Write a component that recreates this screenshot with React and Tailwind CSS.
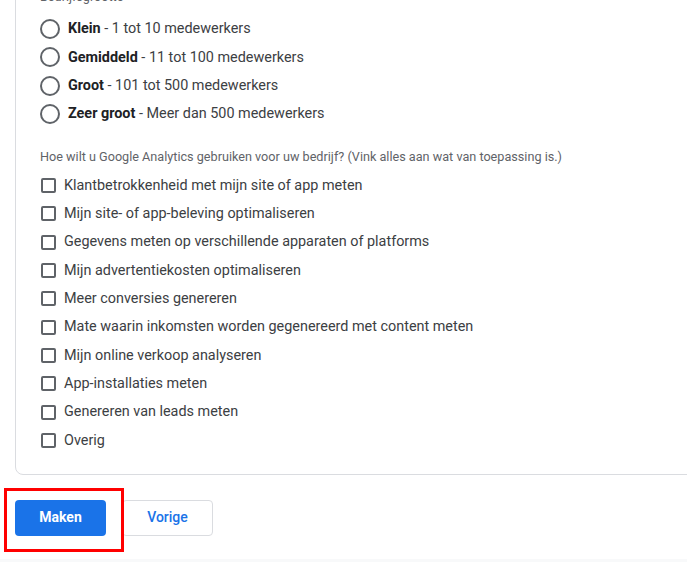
import React from "react";

const sizes = [
  ["Klein", "1 tot 10 medewerkers"],
  ["Gemiddeld", "11 tot 100 medewerkers"],
  ["Groot", "101 tot 500 medewerkers"],
  ["Zeer groot", "Meer dan 500 medewerkers"],
];

const uses = [
  "Klantbetrokkenheid met mijn site of app meten",
  "Mijn site- of app-beleving optimaliseren",
  "Gegevens meten op verschillende apparaten of platforms",
  "Mijn advertentiekosten optimaliseren",
  "Meer conversies genereren",
  "Mate waarin inkomsten worden gegenereerd met content meten",
  "Mijn online verkoop analyseren",
  "App-installaties meten",
  "Genereren van leads meten",
  "Overig",
];

export default function App() {
  return (
    <div
      className="w-[687px] h-[562px] overflow-hidden bg-white flex flex-col"
      style={{ fontFamily: "Roboto, 'Liberation Sans', sans-serif" }}
    >
      <div className="flex-1 flex flex-col">
        <div className="ml-[15px] w-[700px] -mt-[12px] border border-[#dadce0] rounded-lg pl-6 pb-[19px]">
          <div className="text-[12.6px] leading-4 text-[#5f6368] mb-[10px]">Bedrijfsgrootte</div>
          <div className="flex flex-col">
            {sizes.map(([b, r]) => (
              <div key={b} className="h-[28.33px] flex items-center">
                <span className="w-5 h-5 rounded-full border-2 border-[#5f6368] mr-2 shrink-0" />
                <span className="text-[14.4px] text-[#202124]">
                  <span className="font-bold">{b}</span>
                  <span className="text-[#3c4043]"> - {r}</span>
                </span>
              </div>
            ))}
          </div>
          <div className="text-[12.65px] leading-4 text-[#5f6368] mt-[21px] mb-[6px]">
            Hoe wilt u Google Analytics gebruiken voor uw bedrijf? (Vink alles aan wat van toepassing is.)
          </div>
          <div className="flex flex-col">
            {uses.map((u) => (
              <div key={u} className="h-[28.33px] flex items-center">
                <span className="ml-px w-[15px] h-[15px] rounded-[2px] border-2 border-[#5f6368] mr-2 shrink-0" />
                <span className="text-[14.4px] text-[#3c4043]">{u}</span>
              </div>
            ))}
          </div>
        </div>
        <div className="relative flex gap-4 ml-[15px] mt-[25px]">
          <button className="w-[91px] h-9 rounded bg-[#1a73e8] text-white text-[14px] font-bold">
            Maken
          </button>
          <button className="w-[91px] h-9 rounded border border-[#dadce0] bg-white text-[#1a73e8] text-[14px] font-medium">
            Vorige
          </button>
          <div className="absolute left-[-11px] top-[-12px] w-[120px] h-[64px] border-[3px] border-[#ff0000] pointer-events-none" />
        </div>
      </div>
      <div className="h-[3px] bg-[#f8f9fa]" />
    </div>
  );
}
